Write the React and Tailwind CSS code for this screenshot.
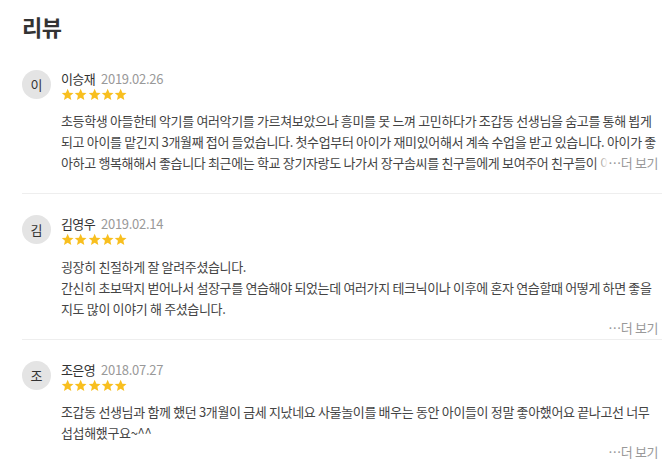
import React from "react";

const reviews = [
  {
    initial: "이",
    name: "이승재",
    date: "2019.02.26",
    text:
      "초등학생 아들한테 악기를 여러악기를 가르쳐보았으나 흥미를 못 느껴 고민하다가 조갑동 선생님을 숨고를 통해 뵙게 되고 아이를 맡긴지 3개월째 접어 들었습니다. 첫수업부터 아이가 재미있어해서 계속 수업을 받고 있습니다. 아이가 좋아하고 행복해해서 좋습니다 최근에는 학교 장기자랑도 나가서 장구솜씨를 친구들에게 보여주어 친구들이 이야기를 많이 해주었다고 하네요. 감사합니다.",
    clamp: true,
  },
  {
    initial: "김",
    name: "김영우",
    date: "2019.02.14",
    lines: [
      "굉장히 친절하게 잘 알려주셨습니다.",
      "간신히 초보딱지 벋어나서 설장구를 연습해야 되었는데 여러가지 테크닉이나 이후에 혼자 연습할때 어떻게 하면 좋을지도 많이 이야기 해 주셨습니다.",
    ],
  },
  {
    initial: "조",
    name: "조은영",
    date: "2018.07.27",
    lines: [
      "조갑동 선생님과 함께 했던 3개월이 금세 지났네요 사물놀이를 배우는 동안 아이들이 정말 좋아했어요 끝나고선 너무 섭섭해했구요~^^",
    ],
  },
];

function Star() {
  return (
    <svg width="13.3" height="13.3" viewBox="0 0 24 24" className="block">
      <path
        d="M12 1.4l3.1 7 7.5.8-5.7 5 1.7 7.5L12 17.8l-6.6 3.9 1.7-7.5-5.7-5 7.5-.8z"
        fill="#f8bf1f"
      />
    </svg>
  );
}

const body = "text-[13px] leading-[21px] tracking-[-0.35px] text-[#444] break-all";
const more = "text-[13px] tracking-[-0.4px] text-[#999]";

function Review({ r, last }) {
  return (
    <div className={"pt-[21px] " + (last ? "" : "border-b border-[#eeeeee]")}>
      <div className="flex gap-[10px] pr-[4px]">
        <div className="w-[29px] h-[29px] shrink-0 rounded-full bg-[#e4e4e4] flex items-center justify-center text-[13px] text-[#333] leading-none">
          {r.initial}
        </div>
        <div className="flex-1 min-w-0">
          <div className="flex items-baseline gap-[6px] pt-[1px] leading-[16px]">
            <span className="text-[13px] tracking-[-0.6px] text-[#333]">{r.name}</span>
            <span className="text-[13px] tracking-[-0.3px] text-[#999]">{r.date}</span>
          </div>
          <div className="flex mt-[1px]">
            <Star />
            <Star />
            <Star />
            <Star />
            <Star />
          </div>
          {r.clamp ? (
            <div className="mt-[9px] pb-[20px]">
              <div className="relative max-h-[63px] overflow-hidden">
                <p className={body}>{r.text}</p>
                <div className="absolute right-0 bottom-0 flex h-[21px] items-center">
                  <div className="w-[14px] h-full bg-gradient-to-r from-white/0 to-white" />
                  <span className={"bg-white leading-[21px] " + more}>⋯더 보기</span>
                </div>
              </div>
            </div>
          ) : (
            <div className="mt-[9px] pb-[3px]">
              {r.lines.map((l, i) => (
                <p key={i} className={body}>
                  {l}
                </p>
              ))}
              <div className={"text-right leading-[17px] " + more}>⋯더 보기</div>
            </div>
          )}
        </div>
      </div>
    </div>
  );
}

export default function App() {
  return (
    <div
      className="w-[667px] h-[466px] overflow-hidden bg-white pl-[22px] pr-[5px]"
      style={{ fontFamily: '"Noto Sans CJK KR", "Noto Sans", sans-serif' }}
    >
      <h1 className="mt-[12px] text-[22px] font-bold leading-[28px] text-[#333] tracking-[-0.5px]">리뷰</h1>
      <div className="mt-[9px]">
        {reviews.map((r, i) => (
          <Review key={i} r={r} last={i === reviews.length - 1} />
        ))}
      </div>
    </div>
  );
}
